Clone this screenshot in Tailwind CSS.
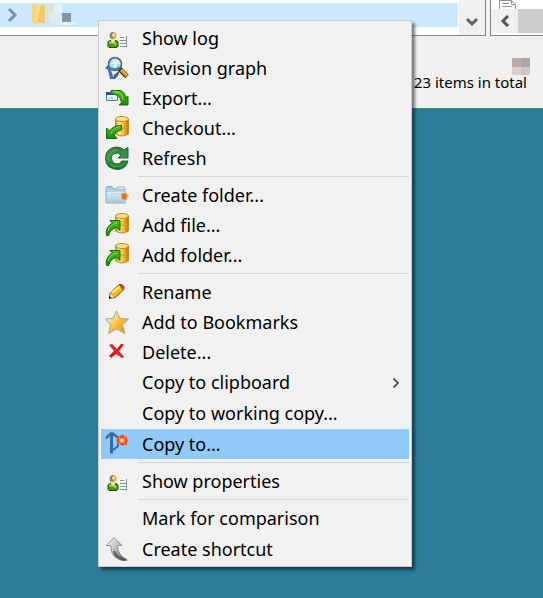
<!DOCTYPE html>
<html lang="en">
<head>
<meta charset="utf-8">
<title>Repository browser</title>
<script src="https://cdn.jsdelivr.net/npm/@tailwindcss/browser@4"></script>
</head>
<body class="relative flex min-h-screen flex-col overflow-x-hidden bg-[#2d7c99] font-['Noto_Sans','Open_Sans',sans-serif] text-black">

<svg class="absolute size-0" aria-hidden="true">
  <defs>
    <linearGradient id="gold"><stop offset="0" stop-color="#d99214"/><stop offset=".3" stop-color="#ffe88a"/><stop offset=".6" stop-color="#f6bd35"/><stop offset="1" stop-color="#b9730d"/></linearGradient>
    <linearGradient id="green" x2="0" y2="1"><stop offset="0" stop-color="#4cc41e"/><stop offset="1" stop-color="#178a0c"/></linearGradient>
    <linearGradient id="deep" x2="0" y2="1"><stop offset="0" stop-color="#2b7a35"/><stop offset=".5" stop-color="#459c4c"/><stop offset="1" stop-color="#136f1f"/></linearGradient>
    <linearGradient id="star" x2="1" y2="1"><stop offset=".2" stop-color="#fff0a8"/><stop offset=".55" stop-color="#f9bb3e"/><stop offset="1" stop-color="#e7850f"/></linearGradient>
    <linearGradient id="folder" x2="0" y2="1"><stop offset="0" stop-color="#9cc3d6"/><stop offset=".5" stop-color="#cfe3ec"/><stop offset="1" stop-color="#a5c8d9"/></linearGradient>
    <linearGradient id="silver" x2="1" y2="1"><stop offset="0" stop-color="#ffffff"/><stop offset=".5" stop-color="#b9bab5"/><stop offset="1" stop-color="#4c4d49"/></linearGradient>
  </defs>
  <symbol id="i-log" viewBox="0 0 24 24">
    <path d="M3 20.500v-4.500l2-1.500h6l2 1.500v4.500l-1 1H4z" fill="#4d9908" stroke="#1d5307"/>
    <path d="M4 16.500h5l2 2" stroke="#a7df35" stroke-width="2" fill="none"/>
    <path d="M6 13h4v2l-2 2-2-2z" fill="#f5dfb0"/>
    <circle cx="8" cy="9.500" r="3.500" fill="#e9a43c"/><path d="M5 12V8q1-2 3-2v7z" fill="#8b8072"/><circle cx="8.500" cy="9" r="1.500" fill="#ffe6a2"/>
    <path d="M15 10h7v11h-7z" fill="#f7f7f7"/><path d="M15 11.500h4M15 14.500h6M15 17.500h6M15 20.500h7M21.500 10v11" stroke="#8b8f94" fill="none"/>
  </symbol>
  <symbol id="i-graph" viewBox="0 0 24 24">
    <path d="M0 12l4-4 3 4-1 2 3 9H5L3 14z" fill="#4272b5"/><path d="M8 23l1-4 5-4v3l-4 5z" fill="#315b99"/>
    <circle cx="10" cy="8" r="6.500" fill="#a9d8f3" stroke="#4b6678" stroke-width="1.500"/>
    <path d="M6 8l3-4h4l2 4-3-1v5H9V8z" fill="#e7f7ff"/><path d="M6 12q4 3 8-1" stroke="#3e82b5" stroke-width="2" fill="none"/>
    <path d="M14.500 13l7.500 7.500" stroke="#583908" stroke-width="5"/><path d="M16 14l6 6" stroke="#dc9b28" stroke-width="3"/><path d="M17 14l5 5" stroke="#ffd66b"/>
  </symbol>
  <symbol id="i-export" viewBox="0 0 24 24">
    <path d="M1.500 6.500h11v8h-11z" fill="#eaf5ff" stroke="#4178ae"/><path d="M1 6h12v3H1z" fill="#2454a0"/><path d="M3 11h5v2H3z" fill="#b5d8f4"/>
    <path d="M6 4.500h9q5 1 5.500 7l2.500-1v8.500h-9l2.500-2.500q-1-8-10.500-9z" fill="url(#green)" stroke="#176f0b"/><path d="M9 5.500q8 0 9 8" stroke="#94e65b" fill="none"/>
  </symbol>
  <symbol id="i-drum" viewBox="0 0 24 24">
    <path d="M10.500 3v15q6.500 4 13 0V3z" fill="url(#gold)" stroke="#c08a1f"/><ellipse cx="17" cy="3" rx="6.500" ry="2.500" fill="#ffe18b" stroke="#c68a19"/><path d="M11 11q6 3 12 0" fill="none" stroke="#d99a2a"/>
  </symbol>
  <symbol id="i-checkout" viewBox="0 0 24 24">
    <use href="#i-drum"/><path d="M1.500 12v10.500H12L9 19q2-4.500 7.500-5V9.500Q9 9 4.500 15z" fill="url(#green)" stroke="#126b09"/><path d="M5.500 18Q9 11 15 10.500" fill="none" stroke="#7fdb48"/>
  </symbol>
  <symbol id="i-refresh" viewBox="0 0 24 24">
    <path d="M19 4l4-2.500V12H13l3-3q-4-3.500-7.500-1t-1 7.500q3 4 8 1.500l1-2h6.500q-2 8-10 8.500Q1 23 .500 13 .500 2 11 1q5 0 8 3z" fill="url(#deep)" stroke="#1e6a2a"/><path d="M4 9q3-5 8-5" fill="none" stroke="#73b377"/><path d="M5 18q6 5 13 1" fill="none" stroke="#4fae57"/>
  </symbol>
  <symbol id="i-folder" viewBox="0 0 24 24">
    <path d="M1 19.500V5l1-1.500h5L9 6h11v14H2z" fill="url(#folder)" stroke="#8fb1c2"/><path d="M12 6V4h7l1 2" fill="#e0edf3" stroke="#8bb1c6"/><path d="M2 9.500h17" stroke="#deedf4" fill="none"/>
    <path d="M16 10h6v1.500h1.500v3H22V17h-5v-2h-1z" fill="#f0a468"/><path d="M17 11h4v5h-4z" fill="#e0702c"/>
  </symbol>
  <symbol id="i-add" viewBox="0 0 24 24">
    <use href="#i-drum"/><path d="M5 7.500h10v10L11.500 14.500q-6 1-8 8H1.500Q0 14 7.500 10z" fill="url(#green)" stroke="#126b09"/><path d="M3 18q1-6 9-8" fill="none" stroke="#7fdb48"/>
  </symbol>
  <symbol id="i-pencil" viewBox="0 0 24 24">
    <path d="M4.500 18.500l.5-5 9-9h3l2 2v3l-9 8z" fill="#f7b91f" stroke="#8b4a0a"/><path d="M7 13l8-7" stroke="#fff079" stroke-width="2"/><path d="M14 5l2-1 3 3-1 3z" fill="#b93916"/><path d="M5 14l4 3-4 2z" fill="#ffe0b0"/><path d="M4 16l3 2-3 1z" fill="#211207"/>
  </symbol>
  <symbol id="i-star" viewBox="0 0 24 24">
    <path d="M11.500.800l3.500 7.700 8.500.500-6 6 2.500 8.500-8.500-4.500-8 4.500 2-8.500-5-6L8 8.500z" fill="url(#star)" stroke="#aaa493"/>
  </symbol>
  <symbol id="i-delete" viewBox="0 0 24 24">
    <path d="M4 5l3-1 5 5 4-5h2v2l-4 5 5 6-2 1-6-4-5 4-2-2 5-5z" fill="#dc1414"/><path d="M5.500 5.500l11 11" stroke="#f0453c"/>
  </symbol>
  <symbol id="i-branch" viewBox="0 0 24 24">
    <path d="M6.500 2v19.500" stroke="#3b66a8" stroke-width="3" fill="none"/><path d="M8 18l5-4v-3" stroke="#3b66a8" stroke-width="2" fill="none"/><path d="M1 6.500l4.500-5h2l5.500 4" stroke="#3b66a8" stroke-width="2.500" fill="none"/>
    <path d="M16 3h3l.500 2 2.500-.500V7l1 1-1 2v3h-3l-2 1-1.500-1.500L12 12v-2l-1-2 1.500-1L12 4l3 .500z" fill="#ef4b22"/><circle cx="17" cy="8.500" r="2.500" fill="#ffb35a"/><circle cx="17" cy="8.500" r="1" fill="#fff1c5"/><path d="M14 6h1M19.500 6h1M14 11.500h1M19.500 11.500h1" stroke="#ffb28a"/>
  </symbol>
  <symbol id="i-shortcut" viewBox="0 0 24 24">
    <path d="M9 .700l8 7.800h-4.500q0 10 9.500 14v1.200Q6 24 5.500 8.500H1z" fill="url(#silver)" stroke="#8f908b"/><path d="M9 14q2 7 11 9" stroke="#555650" stroke-width="2" fill="none"/>
  </symbol>
</svg>

<header class="flex h-[109px] flex-col border-b border-[#26a05a] bg-[#f0f0f0]">
  <div class="flex gap-1">
    <section class="flex h-9 flex-1 border-r border-b border-[#828790] bg-white" aria-label="Repository tree">
      <div class="mt-[3px] flex h-6 flex-1 items-center bg-[#cce8ff]">
        <svg class="ml-2 h-4 w-[10px]" viewBox="0 0 10 16" fill="none" stroke="#7d91a0" stroke-width="3"><path d="M1 2l6 6-6 6"/></svg>
        <svg class="ml-3 h-6 w-14" viewBox="0 0 56 24">
          <path d="M2 2l5-1v20l-2 1-3-3z" fill="#f9d77b"/><path d="M6 2h9v18H6z" fill="#f1ca69"/><path d="M6 2h5L7 20H6z" fill="#fbdc8c"/>
          <path d="M16 1h8v9h-8z" fill="#dbe6d8"/><path d="M24 1h8v9h-8z" fill="#e4f1f7"/><path d="M18 10h6v10h-3z" fill="#e8edd5"/><path d="M24 10h8v12h-8z" fill="#d9edfa"/><path d="M32 19h16l-4 3H32z" fill="#e3f2ff"/>
          <path d="M32 10h9v9h-9z" fill="#8696a5"/>
        </svg>
      </div>
      <button class="flex w-[27px] items-center justify-center border-l border-white bg-[#f0f0f0] pt-2" aria-label="Scroll down">
        <svg class="h-3 w-3" viewBox="0 0 12 12" fill="none" stroke="#606060" stroke-width="3"><path d="M1 3l5 5 5-5"/></svg>
      </button>
    </section>
    <section class="flex h-9 w-[53px] flex-col border-b border-l border-[#828790] bg-white" aria-label="File list">
      <svg class="ml-2 h-[9px] w-5" viewBox="0 0 20 9" fill="#fff" stroke="#969696"><path d="M.500 9V.500h12l4 4V9M12.500 0v4.500h4M3 3.500h7M3 6.500h10"/></svg>
      <div class="flex h-6">
        <button class="flex w-[27px] items-center justify-center bg-[#f0f0f0]" aria-label="Scroll left">
          <svg class="h-3 w-3" viewBox="0 0 12 12" fill="none" stroke="#555" stroke-width="3"><path d="M9 1L4 6l5 5"/></svg>
        </button>
        <div class="flex-1 bg-[#cdcdcd]"></div>
      </div>
    </section>
  </div>
  <div class="flex flex-1 flex-col items-end pt-[22px]">
    <svg class="mr-3 h-[18px] w-5" viewBox="0 0 20 18"><path d="M1 0h9v9H1z" fill="#bcaea7"/><path d="M10 0h9v9h-9z" fill="#a5a9ac"/><path d="M1 9h9v8H1z" fill="#d9d0cc"/><path d="M10 9h9v8h-9z" fill="#cbc8c9"/></svg>
    <p class="relative -mt-1 mr-4 text-[15px] leading-5">23 items in total</p>
  </div>
</header>

<nav class="absolute top-5 left-[98px] w-[314px] border border-[#ccc] bg-[#f1f1f1] p-[2px] text-[18px] shadow-[3px_3px_3px_rgba(0,0,0,0.5)]" aria-label="Context menu">
  <button class="flex h-[30px] w-full items-center gap-[13px] pl-1 text-left"><svg class="size-6"><use href="#i-log"/></svg>Show log</button>
  <button class="flex h-[30px] w-full items-center gap-[13px] pl-1 text-left"><svg class="size-6"><use href="#i-graph"/></svg>Revision graph</button>
  <button class="flex h-[30px] w-full items-center gap-[13px] pl-1 text-left"><svg class="size-6"><use href="#i-export"/></svg>Export...</button>
  <button class="flex h-[30px] w-full items-center gap-[13px] pl-1 text-left"><svg class="size-6"><use href="#i-checkout"/></svg>Checkout...</button>
  <button class="flex h-[30px] w-full items-center gap-[13px] pl-1 text-left"><svg class="size-6"><use href="#i-refresh"/></svg>Refresh</button>
  <hr class="my-[3px] ml-[37px] border-[#d4d4d4]">
  <button class="flex h-[30px] w-full items-center gap-[13px] pl-1 text-left"><svg class="size-6"><use href="#i-folder"/></svg>Create folder...</button>
  <button class="flex h-[30px] w-full items-center gap-[13px] pl-1 text-left"><svg class="size-6"><use href="#i-add"/></svg>Add file...</button>
  <button class="flex h-[30px] w-full items-center gap-[13px] pl-1 text-left"><svg class="size-6"><use href="#i-add"/></svg>Add folder...</button>
  <hr class="my-[3px] ml-[37px] border-[#d4d4d4]">
  <button class="flex h-[30px] w-full items-center gap-[13px] pl-1 text-left"><svg class="size-6"><use href="#i-pencil"/></svg>Rename</button>
  <button class="flex h-[30px] w-full items-center gap-[13px] pl-1 text-left"><svg class="size-6"><use href="#i-star"/></svg>Add to Bookmarks</button>
  <button class="flex h-[30px] w-full items-center gap-[13px] pl-1 text-left"><svg class="size-6"><use href="#i-delete"/></svg>Delete...</button>
  <button class="flex h-[31px] w-full items-center justify-between pr-[9px] pl-[41px] text-left">Copy to clipboard<svg class="h-3 w-2" viewBox="0 0 8 12" fill="none" stroke="#333" stroke-width="1.500"><path d="M1.500 1.500L6 6l-4.500 4.500"/></svg></button>
  <button class="flex h-[31px] w-full items-center pl-[41px] text-left">Copy to working copy...</button>
  <button class="flex h-[30px] w-full items-center gap-[13px] bg-[#91c9f7] pl-1 text-left"><svg class="size-6"><use href="#i-branch"/></svg>Copy to...</button>
  <hr class="my-[3px] ml-[37px] border-[#d4d4d4]">
  <button class="flex h-[30px] w-full items-center gap-[13px] pl-1 text-left"><svg class="size-6"><use href="#i-log"/></svg>Show properties</button>
  <hr class="my-[3px] ml-[37px] border-[#d4d4d4]">
  <button class="flex h-[31px] w-full items-center pl-[41px] text-left">Mark for comparison</button>
  <button class="flex h-[30px] w-full items-center gap-[13px] pl-1 text-left"><svg class="size-6"><use href="#i-shortcut"/></svg>Create shortcut</button>
</nav>
</body>
</html>
